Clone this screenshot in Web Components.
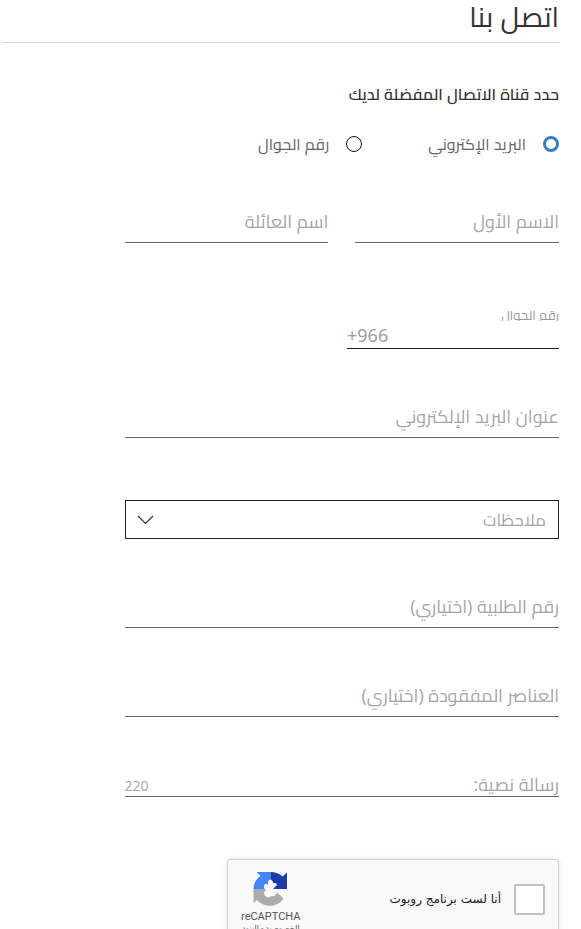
<!DOCTYPE html>
<html lang="ar" dir="rtl">
<head>
<meta charset="utf-8">
<meta name="viewport" content="width=device-width, initial-scale=1">
<title>اتصل بنا</title>
<style>
  html {
    height: 100%;
    overflow: hidden;
  }
  body {
    margin: 0;
    height: 100%;
    overflow: hidden;
    background: #fff;
    color: #333;
    font-family: "Open Sans", Cairo, "Noto Sans Arabic", "DejaVu Sans", sans-serif;
  }
</style>
</head>
<body>
<contact-page heading="اتصل بنا">
  <channel-picker legend="حدد قناة الاتصال المفضلة لديك">
    <radio-option name="email" label="البريد الإكتروني" checked></radio-option>
    <radio-option name="mobile" label="رقم الجوال"></radio-option>
  </channel-picker>
  <field-row>
    <text-field label="الاسم الأول"></text-field>
    <text-field label="اسم العائلة"></text-field>
  </field-row>
  <phone-field label="رقم الجوال" code="+966"></phone-field>
  <text-field label="عنوان البريد الإلكتروني" type="email"></text-field>
  <select-field label="ملاحظات"></select-field>
  <text-field label="رقم الطلبية (اختياري)"></text-field>
  <text-field label="العناصر المفقودة (اختياري)"></text-field>
  <text-field label="رسالة نصية:" class="message" limit="220"></text-field>
  <captcha-box label="أنا لست برنامج روبوت"></captcha-box>
</contact-page>

<script>
// page shell: heading, rule and the form column
class ContactPage extends HTMLElement {
  constructor() {
    super();
    this.attachShadow({ mode: "open" });
    this.shadowRoot.innerHTML = `
      <style>
        :host {
          display: block;
          padding-right: 22px;
          padding-left: 2px;
        }
        h1 {
          margin: 0;
          height: 42px;
          line-height: 32px;
          font-size: 28px;
          font-weight: 400;
          border-bottom: 1px solid #d8d8d8;
        }
        form {
          display: flex;
          flex-direction: column;
          width: 78%;
          margin-top: 39px;
        }
        ::slotted(field-row) { margin-top: 47px; }
        ::slotted(phone-field) { margin-top: 64px; }
        ::slotted(text-field) { margin-top: 49px; }
        ::slotted(text-field.message) { margin-top: 40px; }
        ::slotted(select-field) { margin-top: 62px; }
        ::slotted(captcha-box) { margin-top: 62px; }
      </style>
      <h1>${this.getAttribute("heading")}</h1>
      <form><slot></slot></form>
    `;
  }
}

class ChannelPicker extends HTMLElement {
  constructor() {
    super();
    this.attachShadow({ mode: "open" });
    this.shadowRoot.innerHTML = `
      <style>
        :host { display: block; }
        h2 {
          margin: 0;
          font-size: 16px;
          line-height: 24px;
          font-weight: 600;
        }
        .options {
          display: flex;
          gap: 66px;
          margin-top: 26px;
        }
      </style>
      <h2 id="legend">${this.getAttribute("legend")}</h2>
      <div class="options" role="radiogroup" aria-labelledby="legend"><slot></slot></div>
    `;
  }
}

class RadioOption extends HTMLElement {
  constructor() {
    super();
    this.attachShadow({ mode: "open" });
    this.shadowRoot.innerHTML = `
      <style>
        :host { display: block; }
        label {
          display: flex;
          align-items: center;
          gap: 17px;
          height: 24px;
          font-size: 16px;
          line-height: 24px;
          color: #666;
          white-space: nowrap;
          cursor: pointer;
        }
        input {
          appearance: none;
          box-sizing: border-box;
          width: 16px;
          height: 16px;
          margin: 0;
          border: 1px solid #111;
          border-radius: 50%;
          background: #fff;
        }
        input:checked { border: 3px solid #3b7bbf; }
      </style>
      <label><input type="radio" ${this.hasAttribute("checked") ? "checked" : ""}>${this.getAttribute("label")}</label>
    `;
  }

  connectedCallback() {
    // each radio sits in its own root, so clear the siblings by hand
    this.shadowRoot.querySelector("input").addEventListener("change", () => {
      this.parentElement.querySelectorAll("radio-option").forEach((item) => {
        if (item !== this) item.shadowRoot.querySelector("input").checked = false;
      });
    });
  }
}

class FieldRow extends HTMLElement {
  constructor() {
    super();
    this.attachShadow({ mode: "open" });
    this.shadowRoot.innerHTML = `
      <style>
        :host { display: flex; gap: 27px; }
        ::slotted(*) { flex: 1; }
      </style>
      <slot></slot>
    `;
  }
}

// underlined input, the label lies on the line until something is typed
class TextField extends HTMLElement {
  constructor() {
    super();
    const limit = this.getAttribute("limit");
    this.attachShadow({ mode: "open" });
    this.shadowRoot.innerHTML = `
      <style>
        :host { display: block; }
        .field {
          display: grid;
          grid-template-columns: 1fr auto;
          align-items: start;
          height: 39px;
          border-bottom: 1px solid #666;
        }
        label {
          grid-area: 1 / 1;
          font-size: 18px;
          line-height: 36px;
          color: #a6a6a6;
          white-space: nowrap;
          pointer-events: none;
        }
        input {
          grid-area: 1 / 1;
          min-width: 0;
          width: 100%;
          height: 36px;
          padding: 0;
          border: 0;
          outline: none;
          background: none;
          font: inherit;
          font-size: 18px;
        }
        input:not(:placeholder-shown) + label { visibility: hidden; }
        .count {
          align-self: end;
          font-size: 14px;
          line-height: 20px;
          color: #a6a6a6;
        }
        :host(.message) .field { align-items: end; }
        :host(.message) label { line-height: 24px; }
      </style>
      <div class="field">
        <input id="field" type="${this.getAttribute("type") || "text"}" placeholder=" " ${limit ? `maxlength="${limit}"` : ""}>
        <label for="field">${this.getAttribute("label")}</label>
        ${limit ? `<span class="count">${limit}</span>` : ""}
      </div>
    `;
  }

  connectedCallback() {
    const count = this.shadowRoot.querySelector(".count");
    if (!count) return;
    this.shadowRoot.querySelector("input").addEventListener("input", (e) => {
      count.textContent = this.getAttribute("limit") - e.target.value.length;
    });
  }
}

class PhoneField extends HTMLElement {
  constructor() {
    super();
    this.attachShadow({ mode: "open" });
    this.shadowRoot.innerHTML = `
      <style>
        :host { display: block; width: 212px; }
        label {
          display: block;
          height: 14px;
          overflow: hidden;
          font-size: 13px;
          line-height: 16px;
          color: #999;
        }
        input {
          display: block;
          box-sizing: border-box;
          width: 100%;
          height: 28px;
          padding: 0;
          border: 0;
          border-bottom: 1px solid #222;
          outline: none;
          background: none;
          color: #999;
          font: inherit;
          font-size: 18px;
          text-align: left;
        }
      </style>
      <label for="phone">${this.getAttribute("label")}</label>
      <input id="phone" type="tel" dir="ltr" value="${this.getAttribute("code")}">
    `;
  }
}

class SelectField extends HTMLElement {
  constructor() {
    super();
    const label = this.getAttribute("label");
    this.attachShadow({ mode: "open" });
    this.shadowRoot.innerHTML = `
      <style>
        :host { display: block; }
        .box {
          display: grid;
          align-items: center;
          border: 1px solid #222;
        }
        select {
          grid-area: 1 / 1;
          appearance: none;
          width: 100%;
          height: 37px;
          padding: 0 12px;
          border: 0;
          border-radius: 0;
          background: none;
          color: #a6a6a6;
          font: inherit;
          font-size: 17px;
        }
        svg {
          grid-area: 1 / 1;
          justify-self: end;
          margin-left: 11px;
          pointer-events: none;
        }
      </style>
      <div class="box">
        <select aria-label="${label}"><option>${label}</option></select>
        <svg width="17" height="10" viewBox="0 0 17 10" fill="none" stroke="#333" stroke-width="1.2">
          <path d="M1 1l7.5 7.5L16 1"/>
        </svg>
      </div>
    `;
  }
}

class CaptchaBox extends HTMLElement {
  constructor() {
    super();
    this.attachShadow({ mode: "open" });
    this.shadowRoot.innerHTML = `
      <style>
        :host {
          display: flex;
          justify-content: space-between;
          box-sizing: border-box;
          width: 332px;
          height: 86px;
          padding: 0 13px;
          border: 1px solid #d3d3d3;
          border-radius: 3px;
          background: #f9f9f9;
          box-shadow: 0 0 4px 1px rgba(0, 0, 0, 0.08);
        }
        label {
          display: flex;
          align-items: center;
          gap: 13px;
          height: 78px;
          font-family: "DejaVu Sans", sans-serif;
          font-size: 12px;
          color: #222;
          white-space: nowrap;
        }
        input {
          appearance: none;
          box-sizing: border-box;
          width: 31px;
          height: 31px;
          margin: 0;
          border: 2px solid #c1c1c1;
          border-radius: 2px;
          background: #fff;
        }
        .brand {
          display: flex;
          flex-direction: column;
          align-items: center;
          padding-top: 11px;
          font-family: Roboto, sans-serif;
          color: #555;
        }
        .name {
          margin-top: 4px;
          font-size: 11px;
          line-height: 14px;
        }
        .links {
          font-family: Roboto, "DejaVu Sans", sans-serif;
          font-size: 8px;
          line-height: 10px;
          white-space: nowrap;
        }
        a { color: inherit; text-decoration: none; }
      </style>
      <label><input type="checkbox">${this.getAttribute("label")}</label>
      <div class="brand">
        <svg width="35" height="35" viewBox="0 0 70 70">
          <path fill="#4285f4" d="M35 2H7l8 8C6 16 1 25 1 36h22c-2-5-1-9 3-11l5 3c-2-6-1-10 4-11z"/>
          <path fill="#1c3aa9" d="M35 2c10 0 18 3 24 9l9-8v33H40l8-8c-1-4-4-5-7-3-1-4-3-7-6-8z"/>
          <path fill="#ababab" d="M1 36v28l7-6c14 16 40 16 53-3L48 43c-2 6-7 9-12 7-3 4-10 3-12-1-4-4-2-8 3-10l-4-3z"/>
        </svg>
        <div class="name" dir="ltr">reCAPTCHA</div>
        <div class="links"><a href="#privacy">الخصوصية</a> - <a href="#terms">البنود</a></div>
      </div>
    `;
  }
}

customElements.define("contact-page", ContactPage);
customElements.define("channel-picker", ChannelPicker);
customElements.define("radio-option", RadioOption);
customElements.define("field-row", FieldRow);
customElements.define("text-field", TextField);
customElements.define("phone-field", PhoneField);
customElements.define("select-field", SelectField);
customElements.define("captcha-box", CaptchaBox);
</script>
</body>
</html>
